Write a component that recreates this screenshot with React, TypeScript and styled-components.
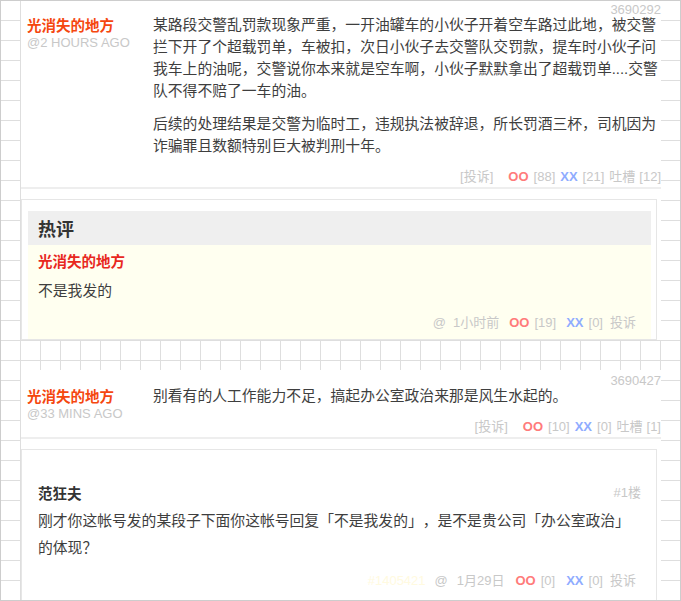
import React from "react";
import styled, { createGlobalStyle } from "styled-components";

const GlobalStyle = createGlobalStyle`
  html, body { margin: 0; padding: 0; background: #fff; }
  body { width: 681px; height: 601px; overflow: hidden; }
`;

const Frame = styled.div`
  box-sizing: border-box;
  width: 681px;
  height: 601px;
  border: 1px solid #cdcdcd;
  overflow: hidden;
  background-color: #fff;
  background-image:
    linear-gradient(to right, transparent 19px, #dedede 19px, #dedede 20px, transparent 20px),
    linear-gradient(to bottom, transparent 19px, #dedede 19px, #dedede 20px, transparent 20px);
  background-size: 20px 20px;
  font-family: "Liberation Sans", "Noto Sans CJK SC", sans-serif;
  text-spacing-trim: space-all;
`;

const Column = styled.div`
  width: 640px;
  margin-left: 20px;
  margin-top: -2px;
`;

const PostCard = styled.div<{ $gapTop?: number }>`
  background: #fff;
  border-bottom: 2px solid #eeeeee;
  margin-top: ${(p) => p.$gapTop ?? 0}px;
`;

const IdRow = styled.div`
  height: 15px;
  line-height: 22px;
  text-align: right;
  font-size: 13px;
  color: #c8c8c8;
`;

const PostBody = styled.div`
  display: flex;
`;

const Author = styled.div`
  box-sizing: border-box;
  width: 132px;
  flex: none;
  padding-left: 6px;
`;

const AuthorName = styled.div`
  font-family: "Noto Sans CJK SC", sans-serif;
  font-size: 14.5px;
  font-weight: bold;
  line-height: 22px;
  color: #f5470f;
`;

const AuthorTime = styled.div`
  font-size: 13px;
  line-height: 14px;
  color: #c8c8c8;
`;

const Content = styled.div`
  flex: 1;
  min-width: 0;
`;

const Para = styled.p`
  margin: 0 0 11px;
  font-size: 14.8px;
  line-height: 22px;
  color: #3e3e3e;
  &:last-child { margin-bottom: 0; }
`;

const Footer = styled.div<{ $mt: number; $pr?: number }>`
  margin-top: ${(p) => p.$mt}px;
  padding-right: ${(p) => p.$pr ?? 0}px;
  line-height: 20px;
  font-size: 13px;
  text-align: right;
  color: #c8c8c8;
  white-space: nowrap;
`;

const Meta = styled.span<{ $ml?: number }>`
  margin-left: ${(p) => p.$ml ?? 0}px;
`;

const Oo = styled(Meta)`
  color: #ff7b7b;
  font-weight: bold;
`;

const Xx = styled(Meta)`
  color: #8facff;
  font-weight: bold;
`;

const HiddenId = styled(Meta)`
  color: #fffae0;
`;

const CommentsWrap = styled.div`
  background: #fff;
  padding: 10px 4px 0 0;
`;

const CommentBox = styled.div<{ $pad: string }>`
  border: 1px solid #e6e6e6;
  padding: ${(p) => p.$pad};
`;

const HotHeader = styled.div`
  height: 34px;
  line-height: 34px;
  padding-left: 10px;
  background: #efefef;
  font-family: "Noto Sans CJK SC", sans-serif;
  font-size: 18px;
  font-weight: bold;
  color: #333;
`;

const HotBody = styled.div`
  background: #fffff0;
  padding: 5px 15px 6px 10px;
`;

const HotName = styled.div`
  font-family: "Noto Sans CJK SC", sans-serif;
  font-size: 14.5px;
  font-weight: bold;
  line-height: 22px;
  color: #e8281e;
`;

const CommentText = styled.div<{ $lh: number; $mt: number }>`
  margin-top: ${(p) => p.$mt}px;
  max-width: 596px;
  font-size: 14.8px;
  line-height: ${(p) => p.$lh}px;
  color: #3e3e3e;
`;

const CommentHead = styled.div`
  display: flex;
  justify-content: space-between;
  align-items: center;
  line-height: 22px;
`;

const CommenterName = styled.span`
  font-family: "Noto Sans CJK SC", sans-serif;
  font-size: 14.5px;
  font-weight: bold;
  color: #333;
`;

const Floor = styled.span`
  font-size: 13px;
  color: #c8c8c8;
`;

export default function App() {
  return (
    <>
      <GlobalStyle />
      <Frame>
        <Column>
          <PostCard>
            <IdRow>3690292</IdRow>
            <PostBody>
              <Author>
                <AuthorName>光消失的地方</AuthorName>
                <AuthorTime>@2 HOURS AGO</AuthorTime>
              </Author>
              <Content>
                <div>
                  <Para>
                    某路段交警乱罚款现象严重，一开油罐车的小伙子开着空车路过此地，被交警拦下开了个超载罚单，车被扣，次日小伙子去交警队交罚款，提车时小伙子问我车上的油呢，交警说你本来就是空车啊，小伙子默默拿出了超载罚单....交警队不得不赔了一车的油。
                  </Para>
                  <Para>
                    后续的处理结果是交警为临时工，违规执法被辞退，所长罚酒三杯，司机因为诈骗罪且数额特别巨大被判刑十年。
                  </Para>
                </div>
                <Footer $mt={10}>
                  <Meta>[投诉]</Meta>
                  <Oo $ml={15}>OO</Oo>
                  <Meta $ml={5}>[88]</Meta>
                  <Xx $ml={5}>XX</Xx>
                  <Meta $ml={5}>[21]</Meta>
                  <Meta $ml={5}>吐槽</Meta>
                  <Meta $ml={4}>[12]</Meta>
                </Footer>
              </Content>
            </PostBody>
          </PostCard>

          <CommentsWrap>
            <CommentBox $pad="11px 5px 0 6px">
              <HotHeader>热评</HotHeader>
              <HotBody>
                <HotName>光消失的地方</HotName>
                <CommentText $lh={22} $mt={8}>不是我发的</CommentText>
                <Footer $mt={11}>
                  <Meta>@</Meta>
                  <Meta $ml={7}>1小时前</Meta>
                  <Oo $ml={10}>OO</Oo>
                  <Meta $ml={5}>[19]</Meta>
                  <Xx $ml={10}>XX</Xx>
                  <Meta $ml={5}>[0]</Meta>
                  <Meta $ml={7}>投诉</Meta>
                </Footer>
              </HotBody>
            </CommentBox>
          </CommentsWrap>

          <PostCard $gapTop={30}>
            <IdRow>3690427</IdRow>
            <PostBody>
              <Author>
                <AuthorName>光消失的地方</AuthorName>
                <AuthorTime>@33 MINS AGO</AuthorTime>
              </Author>
              <Content>
                <div>
                  <Para>别看有的人工作能力不足，搞起办公室政治来那是风生水起的。</Para>
                </div>
                <Footer $mt={10}>
                  <Meta>[投诉]</Meta>
                  <Oo $ml={15}>OO</Oo>
                  <Meta $ml={5}>[10]</Meta>
                  <Xx $ml={5}>XX</Xx>
                  <Meta $ml={5}>[0]</Meta>
                  <Meta $ml={5}>吐槽</Meta>
                  <Meta $ml={4}>[1]</Meta>
                </Footer>
              </Content>
            </PostBody>
          </PostCard>

          <CommentsWrap>
            <CommentBox $pad="32px 15px 20px 16px">
              <CommentHead>
                <CommenterName>范狂夫</CommenterName>
                <Floor>#1楼</Floor>
              </CommentHead>
              <CommentText $lh={27} $mt={4}>
                刚才你这帐号发的某段子下面你这帐号回复「不是我发的」，是不是贵公司「办公室政治」的体现？
              </CommentText>
              <Footer $mt={9} $pr={5}>
                <HiddenId>#1405421</HiddenId>
                <Meta $ml={9}>@</Meta>
                <Meta $ml={9}>1月29日</Meta>
                <Oo $ml={11}>OO</Oo>
                <Meta $ml={5}>[0]</Meta>
                <Xx $ml={11}>XX</Xx>
                <Meta $ml={5}>[0]</Meta>
                <Meta $ml={7}>投诉</Meta>
              </Footer>
            </CommentBox>
          </CommentsWrap>
        </Column>
      </Frame>
    </>
  );
}
